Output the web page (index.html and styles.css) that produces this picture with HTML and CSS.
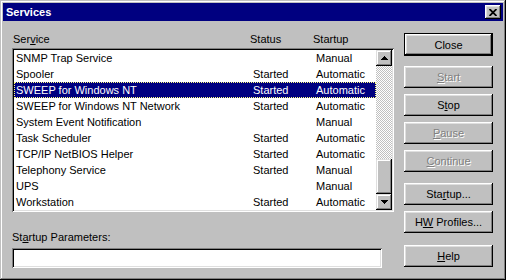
FILE: index.html
```html
<html lang="en">
    <head>
        <title>Services</title>
        <link rel="stylesheet" href="styles.css">
    </head>
    <body>
        <div class="window">
            <div class="titlebar">
                <span>Services</span>
                <div class="title-close">
                    <svg width="8" height="7" viewBox="0 0 8 7"><path d="M0.5 0 L7.5 7 M7.5 0 L0.5 7" stroke="#000" stroke-width="1.8"/></svg>
                </div>
            </div>

            <div class="dialog">
                <div class="left">
                    <div class="colhead">
                        <span>Ser<u>v</u>ice</span>
                        <span>Status</span>
                        <span>Startup</span>
                    </div>

                    <div class="listbox">
                        <div class="rows">
                            <div class="row"><span>SNMP Trap Service</span><span></span><span>Manual</span></div>
                            <div class="row"><span>Spooler</span><span>Started</span><span>Automatic</span></div>
                            <div class="row selected"><span>SWEEP for Windows NT</span><span>Started</span><span>Automatic</span></div>
                            <div class="row"><span>SWEEP for Windows NT Network</span><span>Started</span><span>Automatic</span></div>
                            <div class="row"><span>System Event Notification</span><span></span><span>Manual</span></div>
                            <div class="row"><span>Task Scheduler</span><span>Started</span><span>Automatic</span></div>
                            <div class="row"><span>TCP/IP NetBIOS Helper</span><span>Started</span><span>Automatic</span></div>
                            <div class="row"><span>Telephony Service</span><span>Started</span><span>Manual</span></div>
                            <div class="row"><span>UPS</span><span></span><span>Manual</span></div>
                            <div class="row"><span>Workstation</span><span>Started</span><span>Automatic</span></div>
                        </div>
                        <div class="scrollbar">
                            <div class="sb-btn"><svg width="7" height="4" viewBox="0 0 7 4"><path d="M3 0h1v1h1v1h1v1h1v1h-7v-1h1v-1h1v-1h1z" fill="#000"/></svg></div>
                            <div class="sb-track"></div>
                            <div class="sb-thumb"></div>
                            <div class="sb-btn"><svg width="7" height="4" viewBox="0 0 7 4"><path d="M0 0h7v1h-1v1h-1v1h-1v1h-1v-1h-1v-1h-1v-1h-1z" fill="#000"/></svg></div>
                        </div>
                    </div>

                    <div class="param-label">St<u>a</u>rtup Parameters:</div>
                    <div class="param-input"></div>
                </div>

                <div class="buttons">
                    <div class="btn default"><span>Close</span></div>
                    <div class="btn disabled first"><span><u>S</u>tart</span></div>
                    <div class="btn"><span>S<u>t</u>op</span></div>
                    <div class="btn disabled"><span><u>P</u>ause</span></div>
                    <div class="btn disabled"><span><u>C</u>ontinue</span></div>
                    <div class="btn group"><span>Sta<u>r</u>tup...</span></div>
                    <div class="btn"><span>H<u>W</u> Profiles...</span></div>
                    <div class="btn help"><span><u>H</u>elp</span></div>
                </div>
            </div>
        </div>
    </body>
</html>
```

FILE: styles.css
```css
body{
    margin:0;
    font-family: "Liberation Sans", Arial, sans-serif;
    font-size:11px;
    color:#000;
}
u{
    text-underline-offset:1px;
}
.window{
    width:506px;
    height:280px;
    box-sizing:border-box;
    padding:3px;
    background:#c0c0c0;
    box-shadow: inset -1px -1px #000, inset 1px 1px #c0c0c0, inset -2px -2px #808080, inset 2px 2px #fff;
}
.titlebar{
    height:18px;
    background:#000080;
    color:#fff;
    font-weight:bold;
    display:flex;
    align-items:center;
    justify-content:space-between;
    padding:0 2px 0 3px;
}
.title-close{
    width:16px;
    height:14px;
    box-sizing:border-box;
    background:#c0c0c0;
    display:flex;
    align-items:center;
    justify-content:center;
    box-shadow: inset -1px -1px #000, inset 1px 1px #fff, inset -2px -2px #808080, inset 2px 2px #dfdfdf;
}
.dialog{
    display:flex;
    gap:10px;
    padding-left:9px;
}
.left{
    width:382px;
}
.colhead{
    display:grid;
    grid-template-columns:237px 63px 1fr;
    padding-left:1px;
    margin-top:11px;
    margin-bottom:2px;
    height:14px;
    line-height:14px;
}
.listbox{
    height:164px;
    box-sizing:border-box;
    padding:2px;
    background:#fff;
    display:flex;
    box-shadow: inset 1px 1px #808080, inset -1px -1px #fff, inset 2px 2px #000, inset -2px -2px #dfdfdf;
}
.rows{
    flex:1;
}
.row{
    display:grid;
    grid-template-columns:237px 63px 1fr;
    height:16px;
    line-height:17px;
    padding-left:2px;
    white-space:nowrap;
}
.row.selected{
    background:#000080;
    color:#fff;
    outline:1px dotted #ffff80;
    outline-offset:-1px;
}
.scrollbar{
    width:16px;
    display:flex;
    flex-direction:column;
}
.sb-btn, .sb-thumb{
    background:#c0c0c0;
    box-shadow: inset -1px -1px #000, inset 1px 1px #dfdfdf, inset -2px -2px #808080, inset 2px 2px #fff;
}
.sb-btn{
    height:16px;
    display:flex;
    align-items:center;
    justify-content:center;
}
.sb-track{
    flex:1;
    background-image: conic-gradient(#fff 25%, #c0c0c0 0 50%, #fff 0 75%, #c0c0c0 0);
    background-size:2px 2px;
}
.sb-thumb{
    height:35px;
}
.param-label{
    margin-top:19px;
    line-height:13px;
}
.param-input{
    margin-top:4px;
    width:370px;
    height:20px;
    box-sizing:border-box;
    background:#fff;
    box-shadow: inset 1px 1px #808080, inset -1px -1px #fff, inset 2px 2px #000, inset -2px -2px #dfdfdf;
}
.buttons{
    width:89px;
    display:flex;
    flex-direction:column;
}
.btn{
    height:22px;
    box-sizing:border-box;
    margin-top:6px;
    display:flex;
    align-items:center;
    justify-content:center;
    white-space:nowrap;
    background:#c0c0c0;
    box-shadow: inset -1px -1px #000, inset 1px 1px #fff, inset -2px -2px #808080, inset 2px 2px #dfdfdf;
}
.btn.default{
    margin-top:12px;
    height:23px;
    border:1px solid #000;
}
.btn.first{
    margin-top:10px;
}
.btn.group{
    margin-top:11px;
}
.btn.help{
    margin-top:12px;
}
.btn.disabled{
    color:#808080;
    text-shadow:1px 1px 0 #fff;
}
```
